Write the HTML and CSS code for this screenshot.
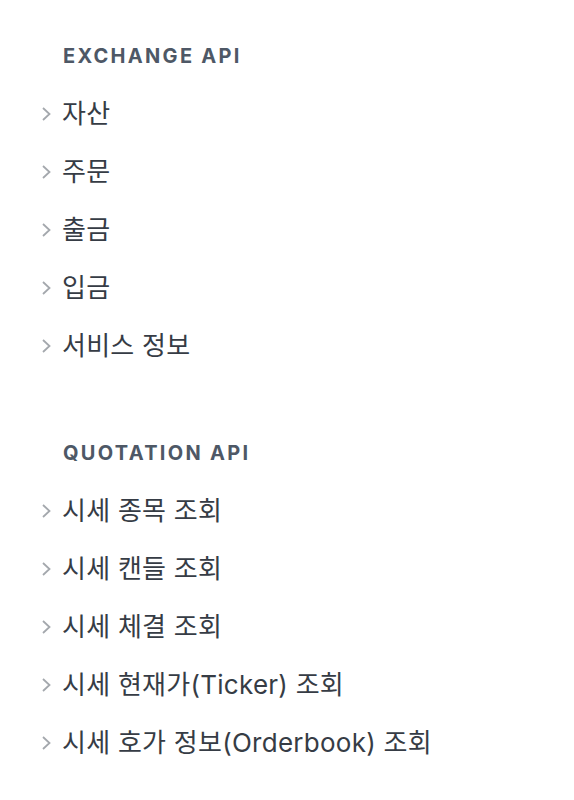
FILE: index.html
```html
<!DOCTYPE html>
<html lang="ko">
<head>
<meta charset="utf-8">
<link rel="stylesheet" href="styles.css">
</head>
<body>
<nav class="nav">
  <section class="group">
    <h2 class="group-title">EXCHANGE API</h2>
    <ul class="items">
      <li class="item"><svg class="chev" viewBox="0 0 10 14"><path d="M2 1 L8.5 7 L2 13"/></svg><span>자산</span></li>
      <li class="item"><svg class="chev" viewBox="0 0 10 14"><path d="M2 1 L8.5 7 L2 13"/></svg><span>주문</span></li>
      <li class="item"><svg class="chev" viewBox="0 0 10 14"><path d="M2 1 L8.5 7 L2 13"/></svg><span>출금</span></li>
      <li class="item"><svg class="chev" viewBox="0 0 10 14"><path d="M2 1 L8.5 7 L2 13"/></svg><span>입금</span></li>
      <li class="item"><svg class="chev" viewBox="0 0 10 14"><path d="M2 1 L8.5 7 L2 13"/></svg><span>서비스 정보</span></li>
    </ul>
  </section>
  <section class="group">
    <h2 class="group-title">QUOTATION API</h2>
    <ul class="items">
      <li class="item"><svg class="chev" viewBox="0 0 10 14"><path d="M2 1 L8.5 7 L2 13"/></svg><span>시세 종목 조회</span></li>
      <li class="item"><svg class="chev" viewBox="0 0 10 14"><path d="M2 1 L8.5 7 L2 13"/></svg><span>시세 캔들 조회</span></li>
      <li class="item"><svg class="chev" viewBox="0 0 10 14"><path d="M2 1 L8.5 7 L2 13"/></svg><span>시세 체결 조회</span></li>
      <li class="item"><svg class="chev" viewBox="0 0 10 14"><path d="M2 1 L8.5 7 L2 13"/></svg><span>시세 현재가(Ticker) 조회</span></li>
      <li class="item"><svg class="chev" viewBox="0 0 10 14"><path d="M2 1 L8.5 7 L2 13"/></svg><span>시세 호가 정보(Orderbook) 조회</span></li>
    </ul>
  </section>
</nav>
</body>
</html>
```

FILE: styles.css
```css
html, body {
  margin: 0;
  padding: 0;
  background: #ffffff;
}
body {
  font-family: Inter, "Noto Sans CJK KR", sans-serif;
}
.nav {
  display: flex;
  flex-direction: column;
  gap: 48px;
  padding: 26px 0 0 41px;
}
.group-title {
  margin: 0;
  height: 59px;
  display: flex;
  align-items: center;
  padding-left: 22px;
  font-size: 20px;
  font-weight: 650;
  letter-spacing: 0.115em;
  color: #4e5866;
}
.items {
  list-style: none;
  margin: 0;
  padding: 0;
}
.item {
  height: 58px;
  display: flex;
  align-items: center;
  gap: 11px;
  font-size: 26px;
  line-height: 1;
  color: #363c45;
}
.item span {
  letter-spacing: 0.01em;
}
.chev {
  width: 10px;
  height: 14px;
  flex: none;
  fill: none;
  stroke: #a4a8ad;
  stroke-width: 1.8;
}
```
